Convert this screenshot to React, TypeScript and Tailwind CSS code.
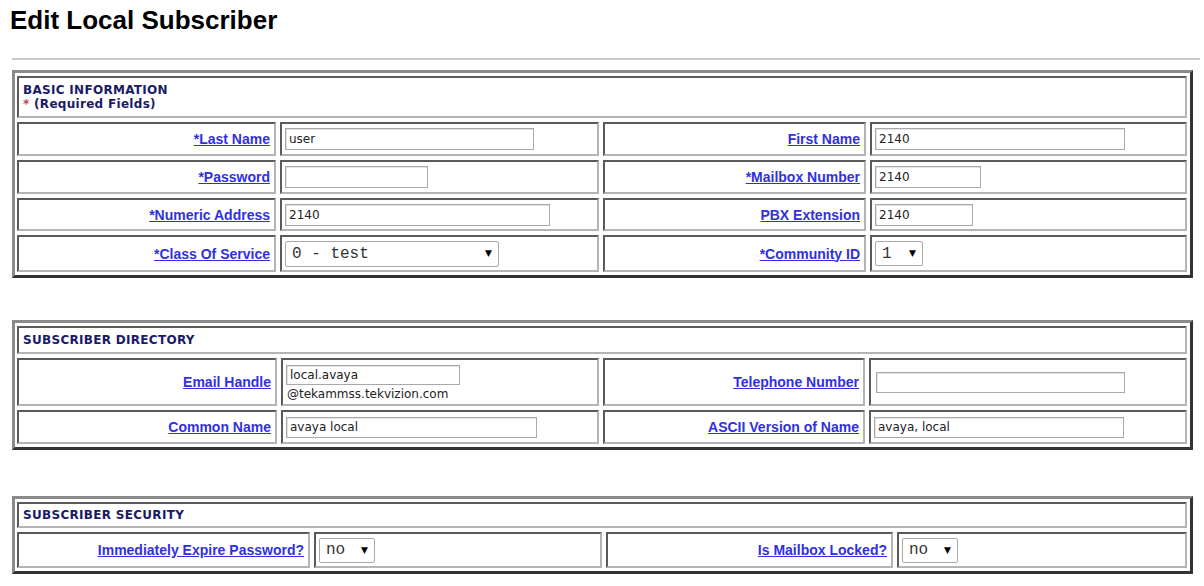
import React from "react";

const cellCls =
  "border-2 border-t-[#5a5a5a] border-l-[#5a5a5a] border-r-[#b4b4b4] border-b-[#b4b4b4] bg-white";

function Label({ text }: { text: string }) {
  return (
    <div className={`${cellCls} flex items-center justify-end pr-[4px]`}>
      <a
        href="#"
        className="text-[#3030e0] underline font-bold text-[14px] leading-[16px] whitespace-nowrap"
        style={{ fontFamily: '"Liberation Sans", Arial, sans-serif' }}
      >
        {text}
      </a>
    </div>
  );
}

function Input({ value, w, h = 22 }: { value: string; w: number; h?: number }) {
  return (
    <div
      className="border border-[#a9a9a9] shadow-[inset_1px_1px_0_#e2e2e2] bg-white flex items-center pl-[3px] text-[12px] leading-[14px] text-[#222]"
      style={{ width: w, height: h, fontFamily: '"DejaVu Sans", Verdana, sans-serif' }}
    >
      {value}
    </div>
  );
}

function Select({ value, w, h = 26 }: { value: string; w: number; h?: number }) {
  return (
    <div
      className="border border-[#a9a9a9] rounded-[2px] bg-white flex items-center justify-between pl-[6px] pr-[6px]"
      style={{ width: w, height: h }}
    >
      <span
        className="text-[16px] text-[#333] leading-[18px] whitespace-pre"
        style={{ fontFamily: '"Liberation Mono", "Courier New", monospace' }}
      >
        {value}
      </span>
      <span className="text-[9px] text-black leading-none" style={{ fontFamily: '"DejaVu Sans", sans-serif' }}>
        ▼
      </span>
    </div>
  );
}

function Value({ children, top = false }: { children: React.ReactNode; top?: boolean }) {
  return (
    <div className={`${cellCls} flex ${top ? "flex-col justify-start pt-[5px]" : "items-center"} pl-[3px]`}>
      {children}
    </div>
  );
}

function Header({ children, h }: { children: React.ReactNode; h: number }) {
  return (
    <div
      className={`${cellCls} col-span-4 flex flex-col justify-center pl-[4px] text-[12px] tracking-[0.3px] leading-[14px] font-bold text-[#1a1a66]`}
      style={{ height: h, fontFamily: '"DejaVu Sans", Verdana, sans-serif' }}
    >
      {children}
    </div>
  );
}

function Frame({ children, cols }: { children: React.ReactNode; cols: string }) {
  return (
    <div className="ml-[12px] w-[1181px] border-[3px] border-t-[#8a8a8a] border-l-[#8a8a8a] border-r-[#333] border-b-[#333] p-[3px] pl-[2px] pr-[3px]">
      <div className={`grid ${cols} gap-x-[4px] gap-y-[4px]`}>{children}</div>
    </div>
  );
}

export default function App() {
  return (
    <div
      className="w-[1204px] h-[586px] overflow-hidden bg-white"
      style={{ fontFamily: '"Liberation Sans", Arial, sans-serif' }}
    >
      <h1 className="ml-[10px] pt-[6px] text-[26px] leading-[28px] font-bold text-black">Edit Local Subscriber</h1>
      <div className="ml-[12px] mr-[4px] mt-[24px] h-[2px] bg-[#c8c8c8]" />

      <div className="mt-[10px]">
        <Frame cols="grid-cols-[259px_319px_263px_317px]">
          <Header h={42}>
            <div>BASIC INFORMATION</div>
            <div>
              <span className="text-[#c04848]">*</span> (Required Fields)
            </div>
          </Header>
          <div className="col-span-4 grid grid-cols-[259px_319px_263px_317px] gap-x-[4px] h-[34px]">
            <Label text="*Last Name" />
            <Value><Input value="user" w={249} /></Value>
            <Label text="First Name" />
            <Value><Input value="2140" w={250} /></Value>
          </div>
          <div className="col-span-4 grid grid-cols-[259px_319px_263px_317px] gap-x-[4px] h-[34px]">
            <Label text="*Password" />
            <Value><Input value="" w={143} /></Value>
            <Label text="*Mailbox Number" />
            <Value><Input value="2140" w={106} /></Value>
          </div>
          <div className="col-span-4 grid grid-cols-[259px_319px_263px_317px] gap-x-[4px] h-[33px]">
            <Label text="*Numeric Address" />
            <Value><Input value="2140" w={265} /></Value>
            <Label text="PBX Extension" />
            <Value><Input value="2140" w={98} /></Value>
          </div>
          <div className="col-span-4 grid grid-cols-[259px_319px_263px_317px] gap-x-[4px] h-[37px]">
            <Label text="*Class Of Service" />
            <Value><Select value="0 - test" w={214} /></Value>
            <Label text="*Community ID" />
            <Value><Select value="1" w={48} h={25} /></Value>
          </div>
        </Frame>
      </div>

      <div className="mt-[42px]">
        <Frame cols="grid-cols-[260px_318px_262px_318px]">
          <Header h={28}>
            <div>SUBSCRIBER DIRECTORY</div>
          </Header>
          <div className="col-span-4 grid grid-cols-[260px_318px_262px_318px] gap-x-[4px] h-[48px]">
            <Label text="Email Handle" />
            <Value top>
              <Input value="local.avaya" w={174} h={20} />
              <div
                className="text-[12px] leading-[14px] text-[#222] mt-[2px] pl-[1px]"
                style={{ fontFamily: '"DejaVu Sans", Verdana, sans-serif' }}
              >
                @tekammss.tekvizion.com
              </div>
            </Value>
            <Label text="Telephone Number" />
            <Value><div className="pl-[2px]"><Input value="" w={249} h={21} /></div></Value>
          </div>
          <div className="col-span-4 grid grid-cols-[260px_318px_262px_318px] gap-x-[4px] h-[34px]">
            <Label text="Common Name" />
            <Value><Input value="avaya local" w={251} h={21} /></Value>
            <Label text="ASCII Version of Name" />
            <Value><Input value="avaya, local" w={250} h={21} /></Value>
          </div>
        </Frame>
      </div>

      <div className="mt-[46px]">
        <Frame cols="grid-cols-[293px_288px_287px_290px]">
          <Header h={26}>
            <div>SUBSCRIBER SECURITY</div>
          </Header>
          <div className="col-span-4 grid grid-cols-[293px_288px_287px_290px] gap-x-[4px] h-[36px]">
            <Label text="Immediately Expire Password?" />
            <Value><Select value="no" w={56} h={25} /></Value>
            <Label text="Is Mailbox Locked?" />
            <Value><Select value="no" w={56} h={25} /></Value>
          </div>
        </Frame>
      </div>
    </div>
  );
}
